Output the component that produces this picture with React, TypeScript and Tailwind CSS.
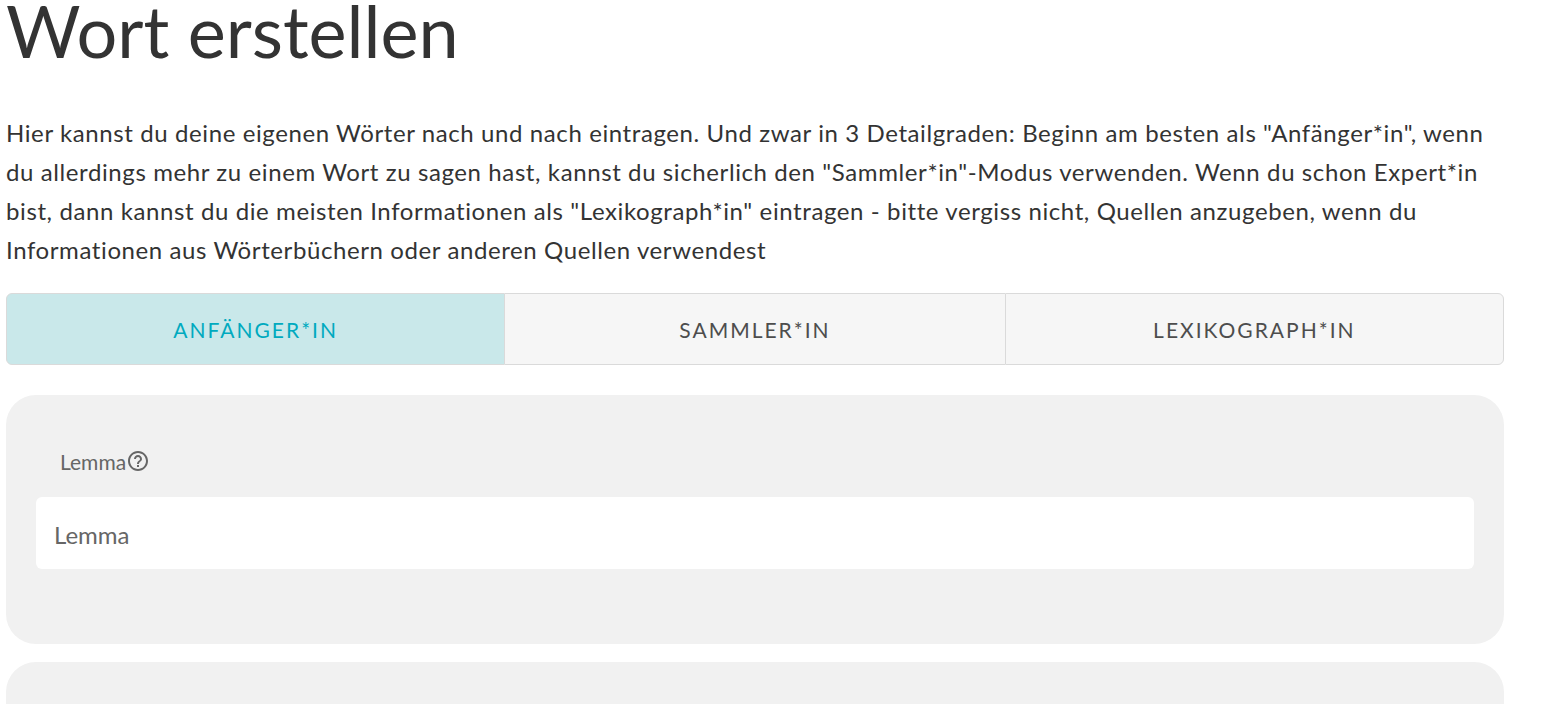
import { useState } from "react";
import clsx from "clsx";

const levels = ["Anfänger*in", "Sammler*in", "Lexikograph*in"];

function HelpIcon() {
  return (
    <svg viewBox="0 0 24 24" className="size-6 fill-current" aria-hidden="true">
      <path d="M11 18h2v-2h-2v2zm1-16C6.48 2 2 6.48 2 12s4.48 10 10 10 10-4.48 10-10S17.52 2 12 2zm0 18c-4.41 0-8-3.59-8-8s3.59-8 8-8 8 3.59 8 8-3.59 8-8 8zm0-14c-2.21 0-4 1.79-4 4h2c0-1.1.9-2 2-2s2 .9 2 2c0 2-3 1.75-3 5h2c0-2.25 3-2.5 3-5 0-2.21-1.79-4-4-4z" />
    </svg>
  );
}

export default function App() {
  const [active, setActive] = useState(0);
  return (
    <main className="h-screen overflow-hidden bg-white pl-1.5 pr-[47px] font-[Lato,sans-serif] text-[#333333]">
      <h1 className="text-[72px] leading-[60px]">Wort erstellen</h1>
      <p className="pt-[53px] text-[24px] leading-[39px] tracking-wide">
        Hier kannst du deine eigenen Wörter nach und nach eintragen. Und zwar in 3 Detailgraden: Beginn am besten als
        "Anfänger*in", wenn du allerdings mehr zu einem Wort zu sagen hast, kannst du sicherlich den
        "Sammler*in"-Modus verwenden. Wenn du schon Expert*in bist, dann kannst du die meisten Informationen als
        "Lexikograph*in" eintragen - bitte vergiss nicht, Quellen anzugeben, wenn du Informationen aus Wörterbüchern
        oder anderen Quellen verwendest
      </p>
      <div className="mt-6 grid h-[72px] grid-cols-3">
        {levels.map((level, i) => (
          <button
            key={level}
            type="button"
            aria-pressed={active === i}
            onClick={() => setActive(i)}
            className={clsx(
              "border-y border-[#dadada] pt-0.5 text-[21px] uppercase tracking-[2px]",
              "first:rounded-l-md first:border-x last:rounded-r-md last:border-x",
              active === i ? "bg-[#c9e8ea] text-[#00aabf]" : "bg-[#f6f6f6] text-[#4d4d4d]",
            )}
          >
            {level}
          </button>
        ))}
      </div>
      <section className="mt-[30px] rounded-[30px] bg-[#f1f1f1] px-[30px] pb-[75px] pt-[54px]">
        <div className="flex h-6 items-center pl-6 text-[#666666]">
          <label htmlFor="lemma" className="pt-0.5 text-[21px]">
            Lemma
          </label>
          <button type="button" aria-label="Hilfe">
            <HelpIcon />
          </button>
        </div>
        <input
          id="lemma"
          type="text"
          placeholder="Lemma"
          className="mt-6 block h-[72px] w-full rounded-md bg-white px-[18px] pt-0.5 text-[24px] outline-none placeholder:text-[#666666]"
        />
      </section>
      <section className="mt-[18px] h-[249px] rounded-[30px] bg-[#f1f1f1]" />
    </main>
  );
}
